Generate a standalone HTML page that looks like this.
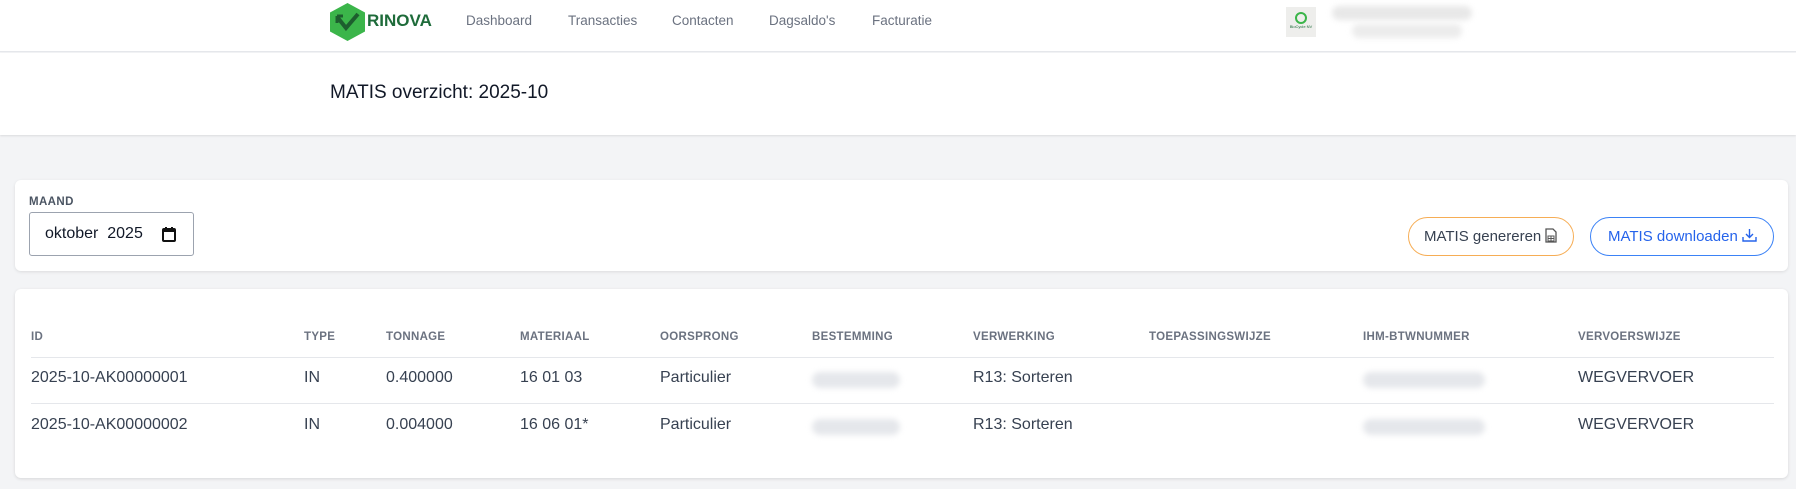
<!DOCTYPE html>
<html><head><meta charset="utf-8"><style>
*{margin:0;padding:0;box-sizing:border-box}
body{width:1796px;height:489px;background:#f3f4f6;font-family:"Liberation Sans",sans-serif;position:relative;overflow:hidden;color:#374151}
.a{position:absolute;white-space:nowrap}
.nav{top:13px;font-size:13.5px;color:#6b7280}
.th{top:331px;font-size:11.5px;font-weight:bold;color:#6b7280;letter-spacing:.3px}
.r1{top:369px;font-size:16px;color:#374151}
.r2{top:416px;font-size:16px;color:#374151}
.blur{position:absolute;height:16px;border-radius:8px;background:#e5e7eb;filter:blur(3px)}
</style></head><body>
<div class="a" style="left:0;top:0;width:1796px;height:52px;background:#fff;border-bottom:1px solid #e5e7eb"></div>
<svg class="a" style="left:329px;top:3px" width="37" height="38" viewBox="0 0 37 38"><polygon points="18.5,0 36,9.5 36,28.5 18.5,38 1,28.5 1,9.5" fill="#3bb54a"/><path d="M9 15 L17 25 L29 11" stroke="#1d5e2e" stroke-width="4" fill="none"/><path d="M8 13 L8 20 M8 13 L14 13" stroke="#1d5e2e" stroke-width="3" fill="none"/></svg>
<div class="a" style="left:367px;top:11px;font-size:17px;font-weight:bold;color:#1e6b3a">RINOVA</div>
<div class="a nav" style="left:466px">Dashboard</div>
<div class="a nav" style="left:568px">Transacties</div>
<div class="a nav" style="left:672px">Contacten</div>
<div class="a nav" style="left:769px">Dagsaldo's</div>
<div class="a nav" style="left:872px">Facturatie</div>
<div class="a" style="left:1286px;top:7px;width:30px;height:30px;background:#eeeeec"><div style="margin:5px auto 0;width:12px;height:12px;border-radius:50%;border:2px solid #3bb54a"></div><div style="font-size:4px;text-align:center;color:#1e6b3a">BioCycle NV</div></div>
<div class="blur" style="left:1332px;top:6px;width:140px;height:14px;background:#e8e8e8"></div>
<div class="blur" style="left:1352px;top:24px;width:110px;height:14px;background:#ececec"></div>
<div class="a" style="left:0;top:53px;width:1796px;height:82px;background:#fff;box-shadow:0 1px 2px rgba(0,0,0,.1)"></div>
<div class="a" style="left:330px;top:82px;font-size:19px;color:#111827">MATIS overzicht: 2025-10</div>
<div class="a" style="left:15px;top:180px;width:1773px;height:91px;background:#fff;border-radius:6px;box-shadow:0 1px 3px rgba(0,0,0,.1)"></div>
<div class="a" style="left:29px;top:196px;font-size:11.5px;font-weight:bold;color:#4b5563;letter-spacing:.4px">MAAND</div>
<div class="a" style="left:29px;top:212px;width:165px;height:44px;border:1px solid #9ca3af;border-radius:3px;background:#fff"></div>
<div class="a" style="left:45px;top:225px;font-size:16px;color:#111827">oktober&nbsp; 2025</div>
<svg class="a" style="left:162px;top:226px" width="14" height="16" viewBox="0 0 14 16"><rect x="1" y="3" width="12" height="12" rx="1" fill="none" stroke="#111" stroke-width="2"/><rect x="1" y="3" width="12" height="3" fill="#111"/><path d="M4 1v3M10 1v3" stroke="#111" stroke-width="2"/></svg>
<div class="a" style="left:1408px;top:217px;width:166px;height:39px;border:1px solid #f6ad55;border-radius:20px;font-size:15px;color:#374151;line-height:37px;padding-left:15px">MATIS genereren <svg width="12" height="15" viewBox="0 0 12 15" style="vertical-align:-2px"><path d="M1 1h7l3 3v10H1z" fill="none" stroke="#555" stroke-width="1.3"/><path d="M3 8h6v5H3zM3 10.5h6M6 8v5" stroke="#555" fill="none"/></svg></div>
<div class="a" style="left:1590px;top:217px;width:184px;height:39px;border:1px solid #3b82f6;border-radius:20px;font-size:15px;color:#2563eb;line-height:37px;padding-left:17px">MATIS downloaden <svg width="15" height="14" viewBox="0 0 15 14" style="vertical-align:-1px"><path d="M7.5 1v8M4 6l3.5 3.5L11 6M1 9v4h13V9" stroke="#2563eb" stroke-width="1.4" fill="none"/></svg></div>
<div class="a" style="left:15px;top:289px;width:1773px;height:189px;background:#fff;border-radius:6px;box-shadow:0 1px 3px rgba(0,0,0,.12)"></div>
<div class="a th" style="left:31px">ID</div>
<div class="a th" style="left:304px">TYPE</div>
<div class="a th" style="left:386px">TONNAGE</div>
<div class="a th" style="left:520px">MATERIAAL</div>
<div class="a th" style="left:660px">OORSPRONG</div>
<div class="a th" style="left:812px">BESTEMMING</div>
<div class="a th" style="left:973px">VERWERKING</div>
<div class="a th" style="left:1149px">TOEPASSINGSWIJZE</div>
<div class="a th" style="left:1363px">IHM-BTWNUMMER</div>
<div class="a th" style="left:1578px">VERVOERSWIJZE</div>
<div class="a" style="left:31px;top:357px;width:1743px;height:1px;background:#e5e7eb"></div>
<div class="a" style="left:31px;top:403px;width:1743px;height:1px;background:#e5e7eb"></div>
<div class="a r1" style="left:31px">2025-10-AK00000001</div>
<div class="a r1" style="left:304px">IN</div>
<div class="a r1" style="left:386px">0.400000</div>
<div class="a r1" style="left:520px">16 01 03</div>
<div class="a r1" style="left:660px">Particulier</div>
<div class="blur" style="left:812px;top:372px;width:88px"></div>
<div class="a r1" style="left:973px">R13: Sorteren</div>
<div class="blur" style="left:1363px;top:372px;width:122px"></div>
<div class="a r1" style="left:1578px">WEGVERVOER</div>
<div class="a r2" style="left:31px">2025-10-AK00000002</div>
<div class="a r2" style="left:304px">IN</div>
<div class="a r2" style="left:386px">0.004000</div>
<div class="a r2" style="left:520px">16 06 01*</div>
<div class="a r2" style="left:660px">Particulier</div>
<div class="blur" style="left:812px;top:419px;width:88px"></div>
<div class="a r2" style="left:973px">R13: Sorteren</div>
<div class="blur" style="left:1363px;top:419px;width:122px"></div>
<div class="a r2" style="left:1578px">WEGVERVOER</div>
</body></html>
